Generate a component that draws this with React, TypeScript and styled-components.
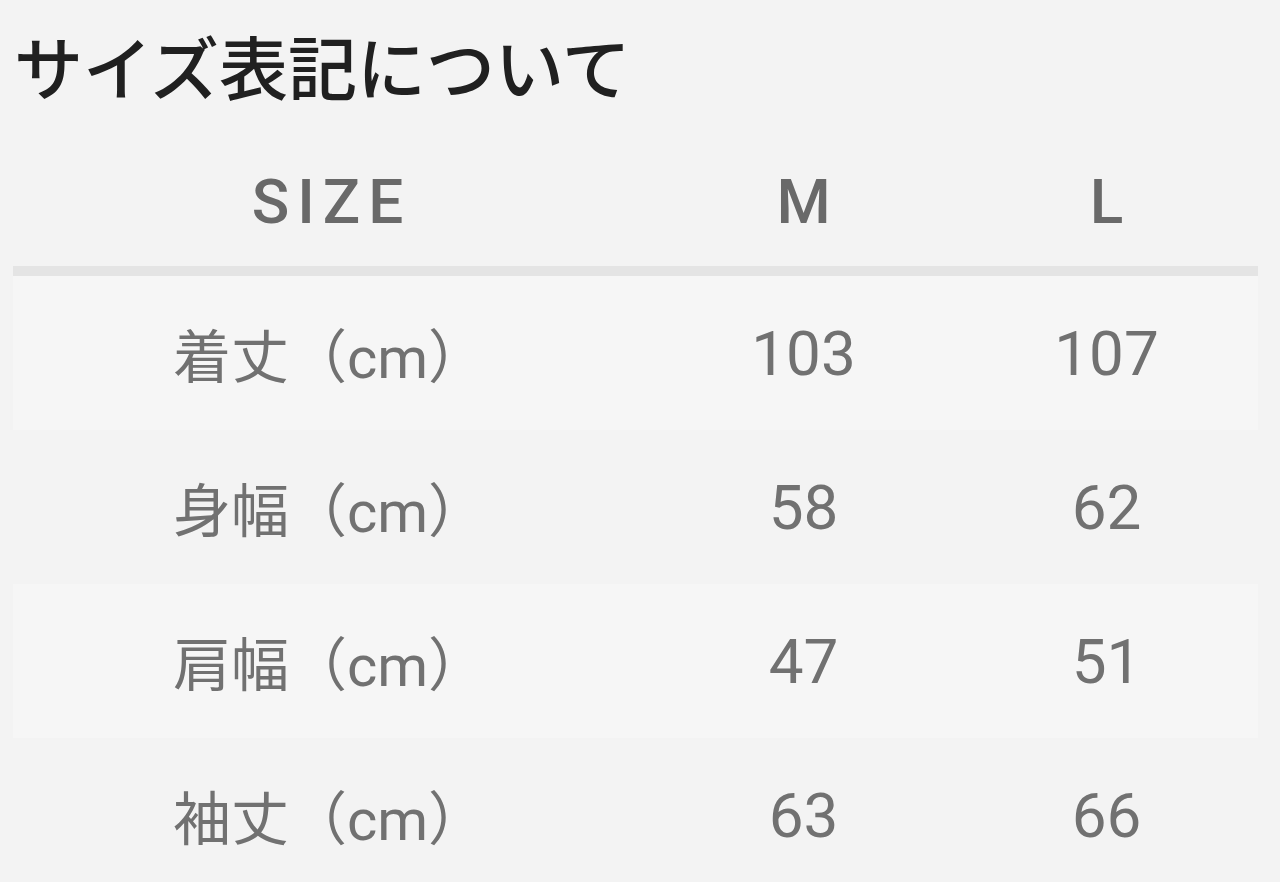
import React from "react";
import styled, { createGlobalStyle } from "styled-components";

const Global = createGlobalStyle`
  html, body {
    margin: 0;
    padding: 0;
    background: #f3f3f3;
  }
  body {
    font-family: Roboto, "Noto Sans CJK JP", sans-serif;
  }
`;

const Page = styled.div`
  width: 1280px;
  height: 882px;
  overflow: hidden;
  box-sizing: border-box;
  padding: 0 22px 0 13px;
  background: #f3f3f3;
`;

const Title = styled.h1`
  margin: 0;
  padding: 19px 0 0 1px;
  font-family: "Noto Sans CJK JP", sans-serif;
  font-weight: 500;
  font-size: 69px;
  line-height: 92px;
  color: #202020;
  letter-spacing: 0;
`;

const Table = styled.div`
  margin-top: 25px;
  display: grid;
  grid-template-columns: 639px 303px 303px;
`;

const HeadCell = styled.div<{ $spaced?: boolean }>`
  height: 130px;
  display: flex;
  align-items: center;
  justify-content: center;
  font-family: Roboto, sans-serif;
  font-weight: 500;
  font-size: 62px;
  color: #696969;
  letter-spacing: ${(p) => (p.$spaced ? "8px" : "0")};
  padding-right: ${(p) => (p.$spaced ? "2px" : "0")};
  border-bottom: 10px solid #e4e4e4;
`;

const Cell = styled.div<{ $odd: boolean; $label?: boolean }>`
  height: 154px;
  display: flex;
  align-items: center;
  justify-content: center;
  background: ${(p) => (p.$odd ? "#f6f6f6" : "#f3f3f3")};
  font-family: Roboto, "Noto Sans CJK JP", sans-serif;
  font-weight: 400;
  font-size: ${(p) => (p.$label ? "58px" : "62px")};
  padding-right: ${(p) => (p.$label ? "6px" : "0")};
  color: #717171;
`;

const rows = [
  ["着丈（cm）", "103", "107"],
  ["身幅（cm）", "58", "62"],
  ["肩幅（cm）", "47", "51"],
  ["袖丈（cm）", "63", "66"],
];

export default function App() {
  return (
    <Page>
      <Global />
      <Title>サイズ表記について</Title>
      <Table>
        <HeadCell $spaced>SIZE</HeadCell>
        <HeadCell>M</HeadCell>
        <HeadCell>L</HeadCell>
        {rows.map((r, i) =>
          r.map((c, j) => (
            <Cell key={`${i}-${j}`} $odd={i % 2 === 0} $label={j === 0}>
              {c}
            </Cell>
          ))
        )}
      </Table>
    </Page>
  );
}
